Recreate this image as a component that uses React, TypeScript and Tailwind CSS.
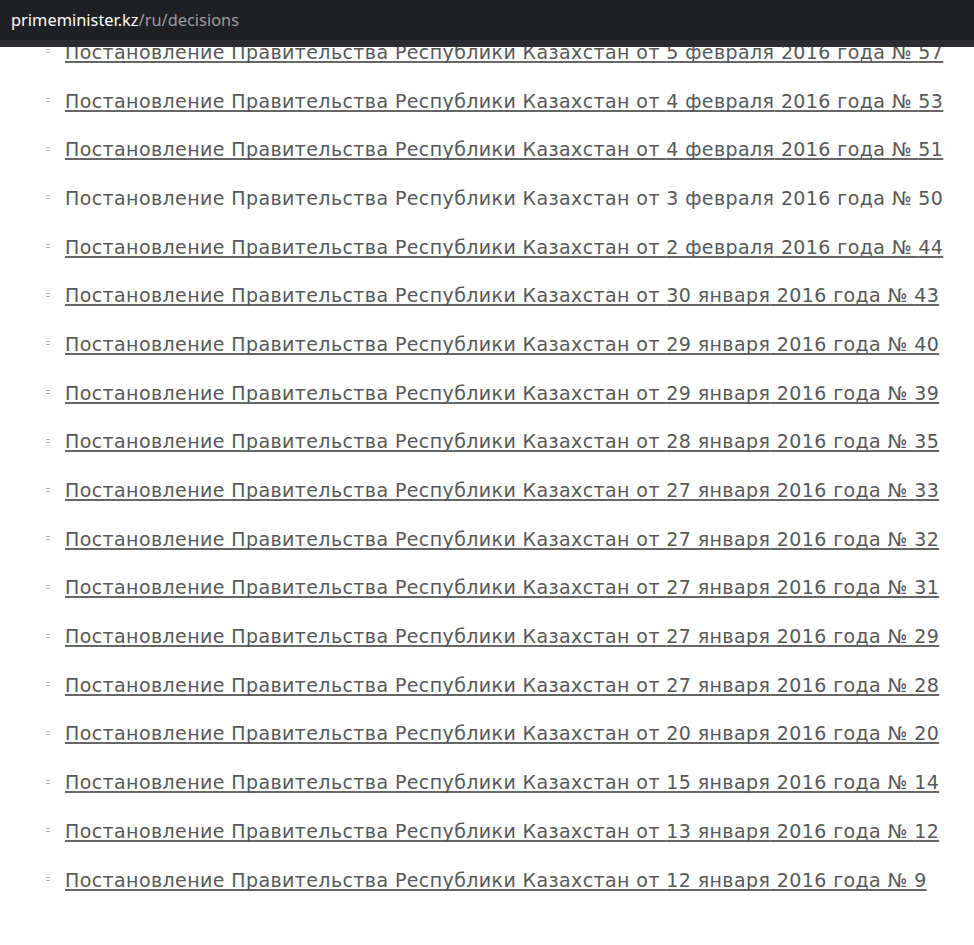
import React from "react";

const items = [
  { date: "5 февраля", num: "57", link: true },
  { date: "4 февраля", num: "53", link: true },
  { date: "4 февраля", num: "51", link: true },
  { date: "3 февраля", num: "50", link: false },
  { date: "2 февраля", num: "44", link: true },
  { date: "30 января", num: "43", link: true },
  { date: "29 января", num: "40", link: true },
  { date: "29 января", num: "39", link: true },
  { date: "28 января", num: "35", link: true },
  { date: "27 января", num: "33", link: true },
  { date: "27 января", num: "32", link: true },
  { date: "27 января", num: "31", link: true },
  { date: "27 января", num: "29", link: true },
  { date: "27 января", num: "28", link: true },
  { date: "20 января", num: "20", link: true },
  { date: "15 января", num: "14", link: true },
  { date: "13 января", num: "12", link: true },
  { date: "12 января", num: "9", link: true },
];

function Bullet() {
  return (
    <span className="mr-[15px] flex w-[4px] -translate-y-[1px] flex-col gap-[2px]">
      <span className="h-[1px] w-full bg-[#b0b0b0]" />
      <span className="h-[1px] w-full bg-[#b0b0b0]" />
    </span>
  );
}

export default function App() {
  return (
    <div className="min-h-screen bg-white">
      <div className="relative z-10">
        <div className="flex h-10 items-center bg-[#1f2023] pl-[11px] font-['Noto_Sans',sans-serif] text-[16.4px]">
          <span className="text-white">primeminister.kz</span>
          <span className="text-[#9a9ca0]">/ru/decisions</span>
        </div>
        <div className="h-[7px] bg-[#2b2c2f]" />
      </div>
      <ul className="-mt-[19px] pl-[46px] font-['DejaVu_Sans',sans-serif] text-[19px] leading-[27px] tracking-[0.4px] text-[#585858]">
        {items.map((it, i) => (
          <li key={i} className="flex h-[48.7px] items-center">
            <Bullet />
            <a
              href="#"
              className={
                it.link
                  ? "underline decoration-[#666666] decoration-[2px] underline-offset-[2px] [text-decoration-skip-ink:none]"
                  : "no-underline"
              }
            >
              Постановление Правительства Республики Казахстан от {it.date} 2016 года № {it.num}
            </a>
          </li>
        ))}
      </ul>
    </div>
  );
}
